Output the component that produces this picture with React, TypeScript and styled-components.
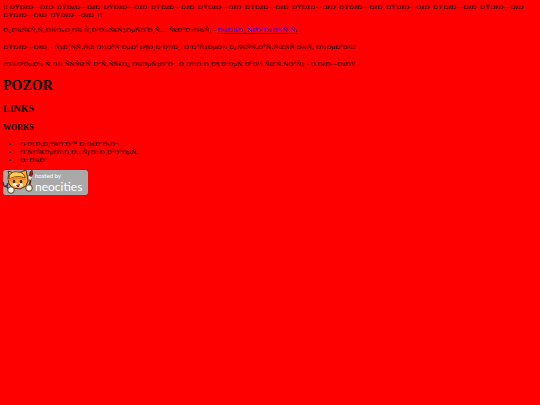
import React from "react";
import styled, { createGlobalStyle } from "styled-components";

const GlobalStyle = createGlobalStyle`
  body {
    margin: 0;
    background: #ff0000;
    color: #000000;
    font-family: "Liberation Serif", "Times New Roman", serif;
    font-size: 7px;
    line-height: 8px;
  }
`;

const Page = styled.main`
  padding: 3px;
`;

const Lines = styled.div`
  display: flex;
  flex-direction: column;
  gap: 9px;
`;

const Paragraph = styled.p`
  margin: 0;
`;

const Banner = styled(Paragraph)`
  margin-bottom: 7px;
`;

const TextLink = styled.a`
  color: #0000ee;
  text-decoration: underline;
`;

const Title = styled.h1`
  margin: 10px 0 0;
  font-size: 14px;
  line-height: 16px;
`;

const Section = styled.h2`
  margin: 9px 0 0;
  font-size: 10px;
  line-height: 12px;
`;

const Subsection = styled.h3`
  margin: 8px 0 0;
  font-size: 8px;
  line-height: 10px;
`;

const Works = styled.ul`
  margin: 7px 0 6px;
  padding-left: 17px;
`;

const Badge = styled.a`
  display: flex;
  align-items: flex-start;
  width: 85px;
  height: 25px;
  border-radius: 3px;
  background: #a9a9a9;
  color: #ffffff;
  text-decoration: none;
  font-family: Lato, "Open Sans", sans-serif;
`;

const Cat = styled.svg`
  flex: none;
  width: 32px;
  height: 26px;
  overflow: visible;
`;

const BadgeLabel = styled.span`
  display: flex;
  flex-direction: column;
  padding-top: 2px;
`;

const Small = styled.span`
  font-size: 6px;
  line-height: 8px;
`;

const Brand = styled.span`
  font-size: 12px;
  line-height: 14px;
`;

const shame = "ÐŸÐžÐ—ÐžÐ\u00a0";
const banner = `!! ${Array(13).fill(shame).join(" ")} !!`;

const works = [
  "Ð\u00a0Ð£Ð¡Ð¡ÐšÐ˜Ð™ Ð¡Ð¢Ð˜Ð›Ð¬",
  "ÐºÑƒÑ€ÐµÐ½Ð¸Ðµ ÑƒÐ±Ð¸Ð²Ð°ÐµÑ‚",
  "Ð±Ð¾Ð³",
];

function CatDrawing() {
  return (
    <Cat viewBox="0 0 32 26" aria-hidden="true">
      <path d="M6 4 5 1l6 2 7-1 5-2 1 5 1 6-2 5-6 3-7-1-4-4-1-6z" fill="#f7a735" stroke="#593014" strokeWidth="1" />
      <path d="M6 7c1-4 5-6 9-5 4 0 7 3 7 6-5-2-10-2-16 1z" fill="#ffce51" stroke="#7b4311" strokeWidth="1" />
      <path d="m5 9 7-2 9 1 2 2-8-1-9 2z" fill="#e98522" />
      <path d="M9 14c3-2 5 0 6 0 2-1 5-1 5 1-1 3-9 3-11-1z" fill="#fff0d0" />
      <ellipse cx="11" cy="11.5" rx="1.3" ry="1.8" fill="#3d2418" />
      <ellipse cx="18" cy="11.5" rx="1.3" ry="1.8" fill="#3d2418" />
      <path d="m13 15 4-1-1 3h-2z" fill="#a42222" />
      <path d="m3 15 4 7M0 12l1 4 3 1 1-4" fill="none" stroke="#3c3846" strokeWidth="1.5" />
      <path d="m26 19 2-12" stroke="#5b2b20" strokeWidth="1.8" />
      <path d="m26 6 1-4 2-2 1 4-2 3z" fill="#a31720" stroke="#4d2020" strokeWidth=".6" />
      <path d="m26 6 3 1-1 3-2-1z" fill="#e8e3d5" />
      <circle cx="8" cy="20" r="3.3" fill="#fff6df" stroke="#59422d" />
      <circle cx="26" cy="18" r="3.3" fill="#fff6df" stroke="#59422d" />
    </Cat>
  );
}

export default function App() {
  return (
    <>
      <GlobalStyle />
      <Page>
        <Banner>{banner}</Banner>
        <Lines>
          <Paragraph>
            {"Ð¿Ð¾Ñ€Ñ‚Ñ„Ð¾Ð»Ð¸Ð¾ Ñ‚Ð²Ð¾Ñ€Ñ‡ÐµÑÐºÐ¸Ñ… Ñ€Ð°Ð±Ð¾Ñ‚ - "}
            <TextLink href="#works">{"Ð¼Ð¾Ð¸ Ñ€Ð°Ð±Ð¾Ñ‚Ñ‹"}</TextLink>
          </Paragraph>
          <Paragraph>
            {shame}
            {" - Ñ‡Ð°ÑÑ‚ÑŒ Ð½Ð°ÑˆÐµÐ¹ Ð¶Ð¸Ð·Ð½Ð¸, Ð·Ð°Ñ‡ÐµÐ¼ Ð¿Ñ€ÑÑ‚Ð°Ñ‚ÑŒÑÑ Ð¾Ñ‚ Ð½ÐµÐ³Ð¾?"}
          </Paragraph>
          <Paragraph>
            {"?Ð¾Ð³ÐµÐ½ Ñ‚Ð¾ ÑÑÑŒÑ‚Ð°Ñ‚ÑÑ€Ð¿ Ð¼ÐµÑ‡Ð°Ð· ,Ð¸Ð½Ð·Ð¸Ð¶ Ð¹ÐµÑˆÐ°Ð½ ÑŒÑ‚ÑÐ°Ñ‡ - Ð\u00a0ÐžÐ—ÐžÐŸ"}
          </Paragraph>
        </Lines>
        <Title>POZOR</Title>
        <Section>LINKS</Section>
        <Subsection>WORKS</Subsection>
        <Works id="works">
          {works.map((work) => (
            <li key={work}>{work}</li>
          ))}
        </Works>
        <Badge href="https://neocities.org">
          <CatDrawing />
          <BadgeLabel>
            <Small>hosted by</Small>
            <Brand>neocities</Brand>
          </BadgeLabel>
        </Badge>
      </Page>
    </>
  );
}
